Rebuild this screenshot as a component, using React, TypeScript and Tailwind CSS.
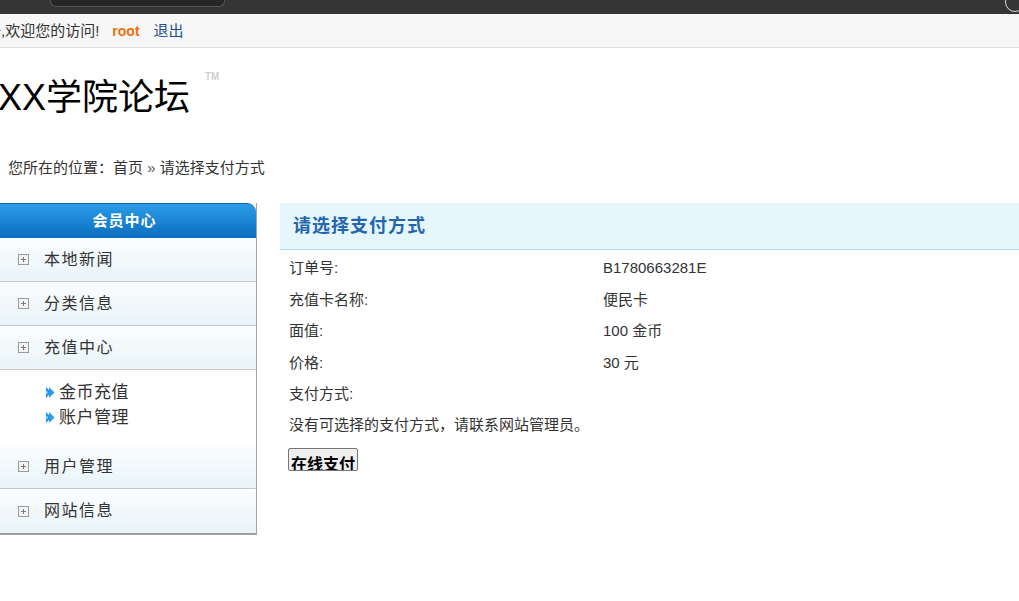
import React from "react";

const font = { fontFamily: '"Liberation Sans", "Noto Sans CJK SC", sans-serif' };

function PlusBox() {
  return (
    <svg width="11" height="11" viewBox="0 0 11 11" className="shrink-0">
      <rect x="0.5" y="0.5" width="10" height="10" fill="#f4f4f4" stroke="#9a9a9a" />
      <path d="M3 5.5h5M5.5 3v5" stroke="#777" strokeWidth="1" />
    </svg>
  );
}

function Arrow() {
  return (
    <svg width="9" height="11" viewBox="0 0 9 11" className="shrink-0">
      <polygon points="0,0 5,5.5 0,11" fill="#1c8fe6" />
      <polygon points="3,0 8.5,5.5 3,11" fill="#2a9cf0" />
      <polygon points="0,3 2.5,5.5 0,8" fill="#7cc6f8" />
    </svg>
  );
}

function MenuItem({ label, last }: { label: string; last?: boolean }) {
  return (
    <div
      className={
        "h-[44px] flex items-center bg-gradient-to-b from-[#fbfdfe] to-[#e8f4f8] pl-[25px] " +
        (last ? "" : "border-b border-[#c9c9c9]")
      }
    >
      <PlusBox />
      <span className="ml-[15px] text-[16px] text-[#333] leading-none tracking-[1.5px]">{label}</span>
    </div>
  );
}

export default function App() {
  const rows: [string, string][] = [
    ["订单号:", "B1780663281E"],
    ["充值卡名称:", "便民卡"],
    ["面值:", "100 金币"],
    ["价格:", "30 元"],
    ["支付方式:", ""],
  ];
  return (
    <div className="w-[1019px] h-[601px] overflow-hidden bg-white relative" style={font}>
      {/* browser chrome strip */}
      <div className="h-[14px] bg-[#353535] relative">
        <div className="absolute left-[50px] top-0 w-[175px] h-[7px] bg-[#262626] border-b border-x border-[#555] rounded-b-[6px]" />
        <div className="absolute right-[-6px] top-[-8px] w-[20px] h-[20px] rounded-full border border-[#ddd]" />
      </div>
      {/* top welcome bar */}
      <div className="h-[34px] bg-[#f7f7f7] border-b border-[#dedede] flex items-center leading-none">
        <span className="ml-[-29px] text-[15px] text-[#333]">您好,欢迎您的访问!</span>
        <span className="ml-[13px] text-[14px] text-[#f26d0c] font-bold">root</span>
        <span className="ml-[14px] text-[15px] text-[#1d4f8f]">退出</span>
      </div>
      {/* logo */}
      <div className="h-[92px] relative">
        <div className="absolute left-[-2px] top-[28px] text-[36px] leading-[44px] text-black">XX学院论坛</div>
        <div className="absolute left-[205px] top-[24px] text-[10px] font-bold leading-none text-[#cfcfcf]">TM</div>
      </div>
      {/* breadcrumb */}
      <div className="h-[62px] pl-[8px] pt-[20px] text-[15px] leading-[16px] text-[#333]">
        您所在的位置：首页 <span className="text-[#555]">»</span> 请选择支付方式
      </div>
      {/* content */}
      <div className="flex items-start mt-[1px]">
        {/* sidebar */}
        <div className="ml-[-7px] w-[264px] shrink-0 border-r border-[#a3a3a3] border-b-2 border-b-[#9f9f9f]">
          <div className="h-[35px] rounded-tr-[9px] bg-gradient-to-b from-[#2a9ce8] to-[#0a6dc0] border-t border-[#0f5fa8] flex items-center justify-center text-white font-bold text-[15px] tracking-[1px]">
            会员中心
          </div>
          <MenuItem label="本地新闻" />
          <MenuItem label="分类信息" />
          <MenuItem label="充值中心" />
          <div className="h-[75px] bg-white pt-[10px] pl-[53px] text-[17px] text-[#333] leading-[25px] tracking-[0.5px]">
            <div className="flex items-center"><Arrow /><span className="ml-[4px]">金币充值</span></div>
            <div className="flex items-center"><Arrow /><span className="ml-[4px]">账户管理</span></div>
          </div>
          <MenuItem label="用户管理" />
          <MenuItem label="网站信息" last />
        </div>
        {/* main */}
        <div className="ml-[23px] flex-1">
          <div className="h-[47px] bg-[#e6f6fd] border-b border-[#a9dcec] flex items-center pl-[13px] text-[18px] font-bold text-[#2465ad] tracking-[1px]">
            请选择支付方式
          </div>
          <div className="pl-[9px] pt-[3px] text-[15px] text-[#333]">
            {rows.map(([k, v]) => (
              <div key={k} className="h-[31.4px] flex items-center">
                <span className="w-[314px] shrink-0">{k}</span>
                <span>{v}</span>
              </div>
            ))}
            <div className="h-[31px] flex items-center">没有可选择的支付方式，请联系网站管理员。</div>
            <button className="mt-[7px] ml-[-1px] w-[70px] h-[23px] overflow-hidden bg-[#efefef] border border-[#767676] rounded-[2px] flex justify-center pt-[6px] text-[16px] font-bold text-black leading-[20px]">
              在线支付
            </button>
          </div>
        </div>
      </div>
    </div>
  );
}
